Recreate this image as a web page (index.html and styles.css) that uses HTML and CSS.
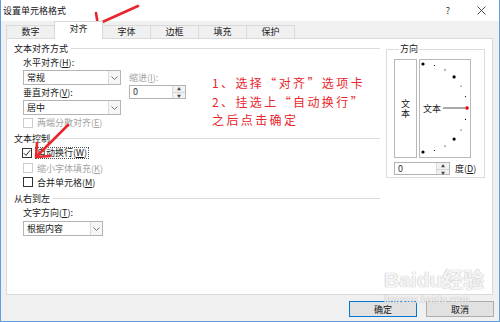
FILE: index.html
```html
<!DOCTYPE html>
<html lang="zh-CN">
<head>
<meta charset="UTF-8">
<title>设置单元格格式</title>
<link rel="stylesheet" href="styles.css">
</head>
<body>
<div class="window">
  <div class="titlebar">
    <span class="title">设置单元格格式</span>
    <span class="help">?</span>
    <svg class="close" width="9" height="9" viewBox="0 0 9 9"><path d="M0.5 0.5L8.5 8.5M8.5 0.5L0.5 8.5" stroke="#333" stroke-width="0.9" fill="none"/></svg>
  </div>
  <div class="body">
    <ul class="tabs">
      <li>数字</li>
      <li class="active">对齐</li>
      <li>字体</li>
      <li>边框</li>
      <li>填充</li>
      <li>保护</li>
    </ul>
    <div class="panel">
      <div class="left">
        <div class="group-title"><span>文本对齐方式</span></div>
        <div class="align-row">
          <div class="align-col">
            <div class="label">水平对齐(<u>H</u>):</div>
            <div class="combo"><span>常规</span><i><svg width="7" height="4" viewBox="0 0 7 4"><path d="M0.5 0.5L3.5 3.5L6.5 0.5" stroke="#777" fill="none"/></svg></i></div>
            <div class="label tall">垂直对齐(<u>V</u>):</div>
            <div class="combo"><span>居中</span><i><svg width="7" height="4" viewBox="0 0 7 4"><path d="M0.5 0.5L3.5 3.5L6.5 0.5" stroke="#777" fill="none"/></svg></i></div>
          </div>
          <div class="indent-col">
            <div class="label muted">缩进(<u>I</u>):</div>
            <div class="spin">
              <span class="value">0</span>
              <span class="arrows"><b>▲</b><b>▼</b></span>
            </div>
          </div>
        </div>
        <div class="check-row muted first-check"><span class="box disabled"></span>两端分散对齐(<u>E</u>)</div>

        <div class="group-title mid"><span>文本控制</span></div>
        <div class="check-row wrap"><span class="box"><svg width="8" height="8" viewBox="0 0 8 8"><path d="M0.8 4.2L3 6.4L7.2 1.2" stroke="#222" stroke-width="1" fill="none"/></svg></span><span class="focus">自动换行(<u>W</u>)</span></div>
        <div class="check-row muted"><span class="box disabled"></span>缩小字体填充(<u>K</u>)</div>
        <div class="check-row"><span class="box"></span>合并单元格(<u>M</u>)</div>

        <div class="group-title rtl"><span>从右到左</span></div>
        <div class="label indent">文字方向(<u>T</u>):</div>
        <div class="combo small indent"><span>根据内容</span><i><svg width="7" height="4" viewBox="0 0 7 4"><path d="M0.5 0.5L3.5 3.5L6.5 0.5" stroke="#777" fill="none"/></svg></i></div>
      </div>

      <fieldset class="orient">
        <legend>方向</legend>
        <div class="orient-boxes">
          <div class="vbox"><span class="vtext">文本</span></div>
          <div class="dial">
            <svg width="50" height="97" viewBox="0 0 50 97">
              <g fill="#000">
                <circle cx="3" cy="4" r="1.6"/>
                <circle cx="14.4" cy="5.5" r="0.6"/>
                <circle cx="25" cy="9.9" r="0.6"/>
                <circle cx="34.1" cy="16.9" r="1.6"/>
                <circle cx="41.1" cy="26" r="0.6"/>
                <circle cx="45.5" cy="36.6" r="0.6"/>
                <circle cx="45.5" cy="59.4" r="0.6"/>
                <circle cx="41.1" cy="70" r="0.6"/>
                <circle cx="34.1" cy="79.1" r="1.6"/>
                <circle cx="25" cy="86.1" r="0.6"/>
                <circle cx="14.4" cy="90.5" r="0.6"/>
                <circle cx="3" cy="92" r="1.6"/>
              </g>
              <text x="3" y="51.5" font-size="9" font-family="Noto Sans CJK SC, sans-serif" fill="#222">文本</text>
              <line x1="23" y1="48" x2="45" y2="48" stroke="#555" stroke-width="1"/>
              <circle cx="47" cy="48" r="1.8" fill="#e00000"/>
            </svg>
          </div>
        </div>
        <div class="degree-row">
          <div class="spin deg">
            <span class="value">0</span>
            <span class="arrows"><b>▲</b><b>▼</b></span>
          </div>
          <span class="deg-label">度(<u>D</u>)</span>
        </div>
      </fieldset>
    </div>
    <div class="buttons">
      <button class="btn primary">确定</button>
      <button class="btn">取消</button>
    </div>
  </div>

  <!-- 截图上的标注 -->
  <div class="note">
    <div>1、选择“对齐”选项卡</div>
    <div>2、挂选上“自动换行”</div>
    <div>之后点击确定</div>
  </div>
  <svg class="arrows-overlay" width="500" height="322" viewBox="0 0 500 322">
    <g stroke="#e8262b" stroke-width="2.6" fill="none" stroke-linecap="round" stroke-linejoin="round">
      <path d="M137 6L97 24"/>
      <path d="M95 13L97 25L106 33"/>
      <path d="M67 125L37 155"/>
      <path d="M36 143L35 157L49 156"/>
    </g>
  </svg>
  <div class="watermark">
    <div class="wm-logo">Baidu经验</div>
    <div class="wm-url">jingyan.baidu.com</div>
  </div>
</div>
</body>
</html>
```

FILE: styles.css
```css
* {
  box-sizing: border-box;
}

body {
  margin: 0;
  font-family: "Noto Sans CJK SC", "Microsoft YaHei", sans-serif;
  font-size: 9px;
  color: #1a1a1a;
  background: #fff;
}

u {
  text-decoration: underline;
}

.window {
  position: relative;
  width: 500px;
  height: 322px;
  border: 1px solid #5e9fe0;
  border-top: none;
  background: #f0f0f0;
  overflow: hidden;
}

.titlebar {
  height: 21px;
  background: #fff;
  display: flex;
  align-items: center;
}

.title {
  flex: 1;
  padding-left: 2px;
  color: #111;
}

.help {
  margin-right: 27px;
  color: #333;
}

.close {
  margin-right: 13px;
}

.body {
  padding-left: 5px;
}

/* onglets */
.tabs {
  display: flex;
  align-items: flex-end;
  list-style-type: none;
  margin: 0 0 -1px 0;
  padding: 0 0 0 1px;
  height: 18px;
  position: relative;
  z-index: 1;
}

.tabs li {
  width: 49px;
  height: 13px;
  margin-left: -1px;
  margin-bottom: 1px;
  border: 1px solid #d9d9d9;
  border-bottom: none;
  background: #f0f0f0;
  text-align: center;
  line-height: 12px;
  color: #222;
}

.tabs li.active {
  height: 18px;
  margin-bottom: 0;
  background: #fff;
  line-height: 14px;
}

.panel {
  width: 487px;
  height: 257px;
  border: 1px solid #d9d9d9;
  background: #fff;
  display: flex;
}

.left {
  width: 373px;
  padding-left: 7px;
}

.group-title {
  height: 17px;
  display: flex;
  align-items: center;
  padding-top: 1px;
}

.group-title::after {
  content: "";
  flex: 1;
  border-top: 1px solid #dcdcdc;
  margin-left: 3px;
}

.group-title.mid {
  height: 15px;
}

.group-title.rtl {
  height: 17px;
}

.label {
  height: 14px;
  line-height: 14px;
}

.label.tall {
  height: 15px;
  line-height: 15px;
}

.indent {
  margin-left: 9px;
}

.muted {
  color: #a3a3a3;
}

.align-row {
  display: flex;
  padding-left: 9px;
}

.align-col {
  width: 98px;
}

.indent-col {
  margin-left: 8px;
  padding-top: 15px;
}

.combo {
  width: 98px;
  height: 15px;
  border: 1px solid #b4b4b4;
  background: #fff;
  display: flex;
  align-items: center;
}

.combo span {
  flex: 1;
  padding-left: 3px;
}

.combo i {
  width: 12px;
  height: 13px;
  border-left: 1px solid #dadada;
  background: #f6f6f6;
  display: flex;
  align-items: center;
  justify-content: center;
}

.combo.small {
  width: 80px;
  margin-top: 1px;
}

.spin {
  width: 57px;
  height: 14px;
  border: 1px solid #b4b4b4;
  background: #fff;
  display: flex;
}

.spin .value {
  flex: 1;
  padding-left: 3px;
  line-height: 12px;
  color: #333;
}

.spin .arrows {
  width: 13px;
  display: flex;
  flex-direction: column;
  border-left: 1px solid #dadada;
  background: #f2f2f2;
}

.spin .arrows b {
  flex: 1;
  font-size: 4px;
  line-height: 6px;
  text-align: center;
  color: #444;
  font-weight: normal;
}

.spin .arrows b + b {
  border-top: 1px solid #d5d5d5;
}

.check-row {
  display: flex;
  align-items: center;
  height: 14px;
  padding-left: 9px;
}

.first-check {
  height: 15px;
}

.check-row.wrap {
  height: 16px;
  padding-left: 8px;
}

.box {
  width: 10px;
  height: 10px;
  border: 1px solid #333;
  margin-right: 4px;
  display: flex;
  align-items: center;
  justify-content: center;
  background: #fff;
}

.box.disabled {
  border-color: #cccccc;
}

.focus {
  outline: 1px dotted #555;
  padding: 0 1px;
  line-height: 10px;
}

/* groupe orientation */
.orient {
  margin: 4px 0 0 6px;
  padding: 4px 0 3px 7px;
  width: 99px;
  height: 135px;
  border: 1px solid #dcdcdc;
}

.orient legend {
  padding: 0 1px;
  margin-left: 5px;
  line-height: 12px;
}

.orient-boxes {
  display: flex;
  gap: 2px;
}

.vbox {
  width: 23px;
  height: 99px;
  border: 1px solid #b8b8b8;
  display: flex;
  align-items: center;
  justify-content: center;
}

.vtext {
  writing-mode: vertical-rl;
  letter-spacing: 1px;
}

.dial {
  width: 52px;
  height: 99px;
  border: 1px solid #b8b8b8;
}

.dial svg {
  display: block;
}

.degree-row {
  display: flex;
  align-items: center;
  margin-top: 4px;
}

.spin.deg {
  width: 56px;
  height: 13px;
}

.deg-label {
  margin-left: 5px;
}

.buttons {
  display: flex;
  justify-content: flex-end;
  gap: 9px;
  padding-right: 5px;
  margin-top: 6px;
}

.btn {
  width: 68px;
  height: 16px;
  padding: 0;
  border: 1px solid #adadad;
  background: #e1e1e1;
  font-family: inherit;
  font-size: 9px;
  line-height: 13px;
  color: #111;
}

.btn.primary {
  border-color: #0078d7;
}

/* annotations */
.note {
  position: absolute;
  left: 211px;
  top: 74px;
  font-size: 12px;
  line-height: 18.5px;
  letter-spacing: 2.4px;
  color: #e8262b;
}

.arrows-overlay {
  position: absolute;
  left: 0;
  top: 0;
  pointer-events: none;
}

.watermark {
  position: absolute;
  left: 383px;
  top: 266px;
  color: rgba(255, 255, 255, 0.85);
  text-shadow: 0 0 1px #bdbdbd, 0 0 1px #bdbdbd;
  pointer-events: none;
}

.wm-logo {
  font-family: "Liberation Sans", "Noto Sans CJK SC", sans-serif;
  font-size: 21px;
  font-weight: bold;
  line-height: 28px;
}

.wm-url {
  font-family: "Liberation Sans", sans-serif;
  font-size: 10px;
  line-height: 12px;
  letter-spacing: 0.3px;
}
```
